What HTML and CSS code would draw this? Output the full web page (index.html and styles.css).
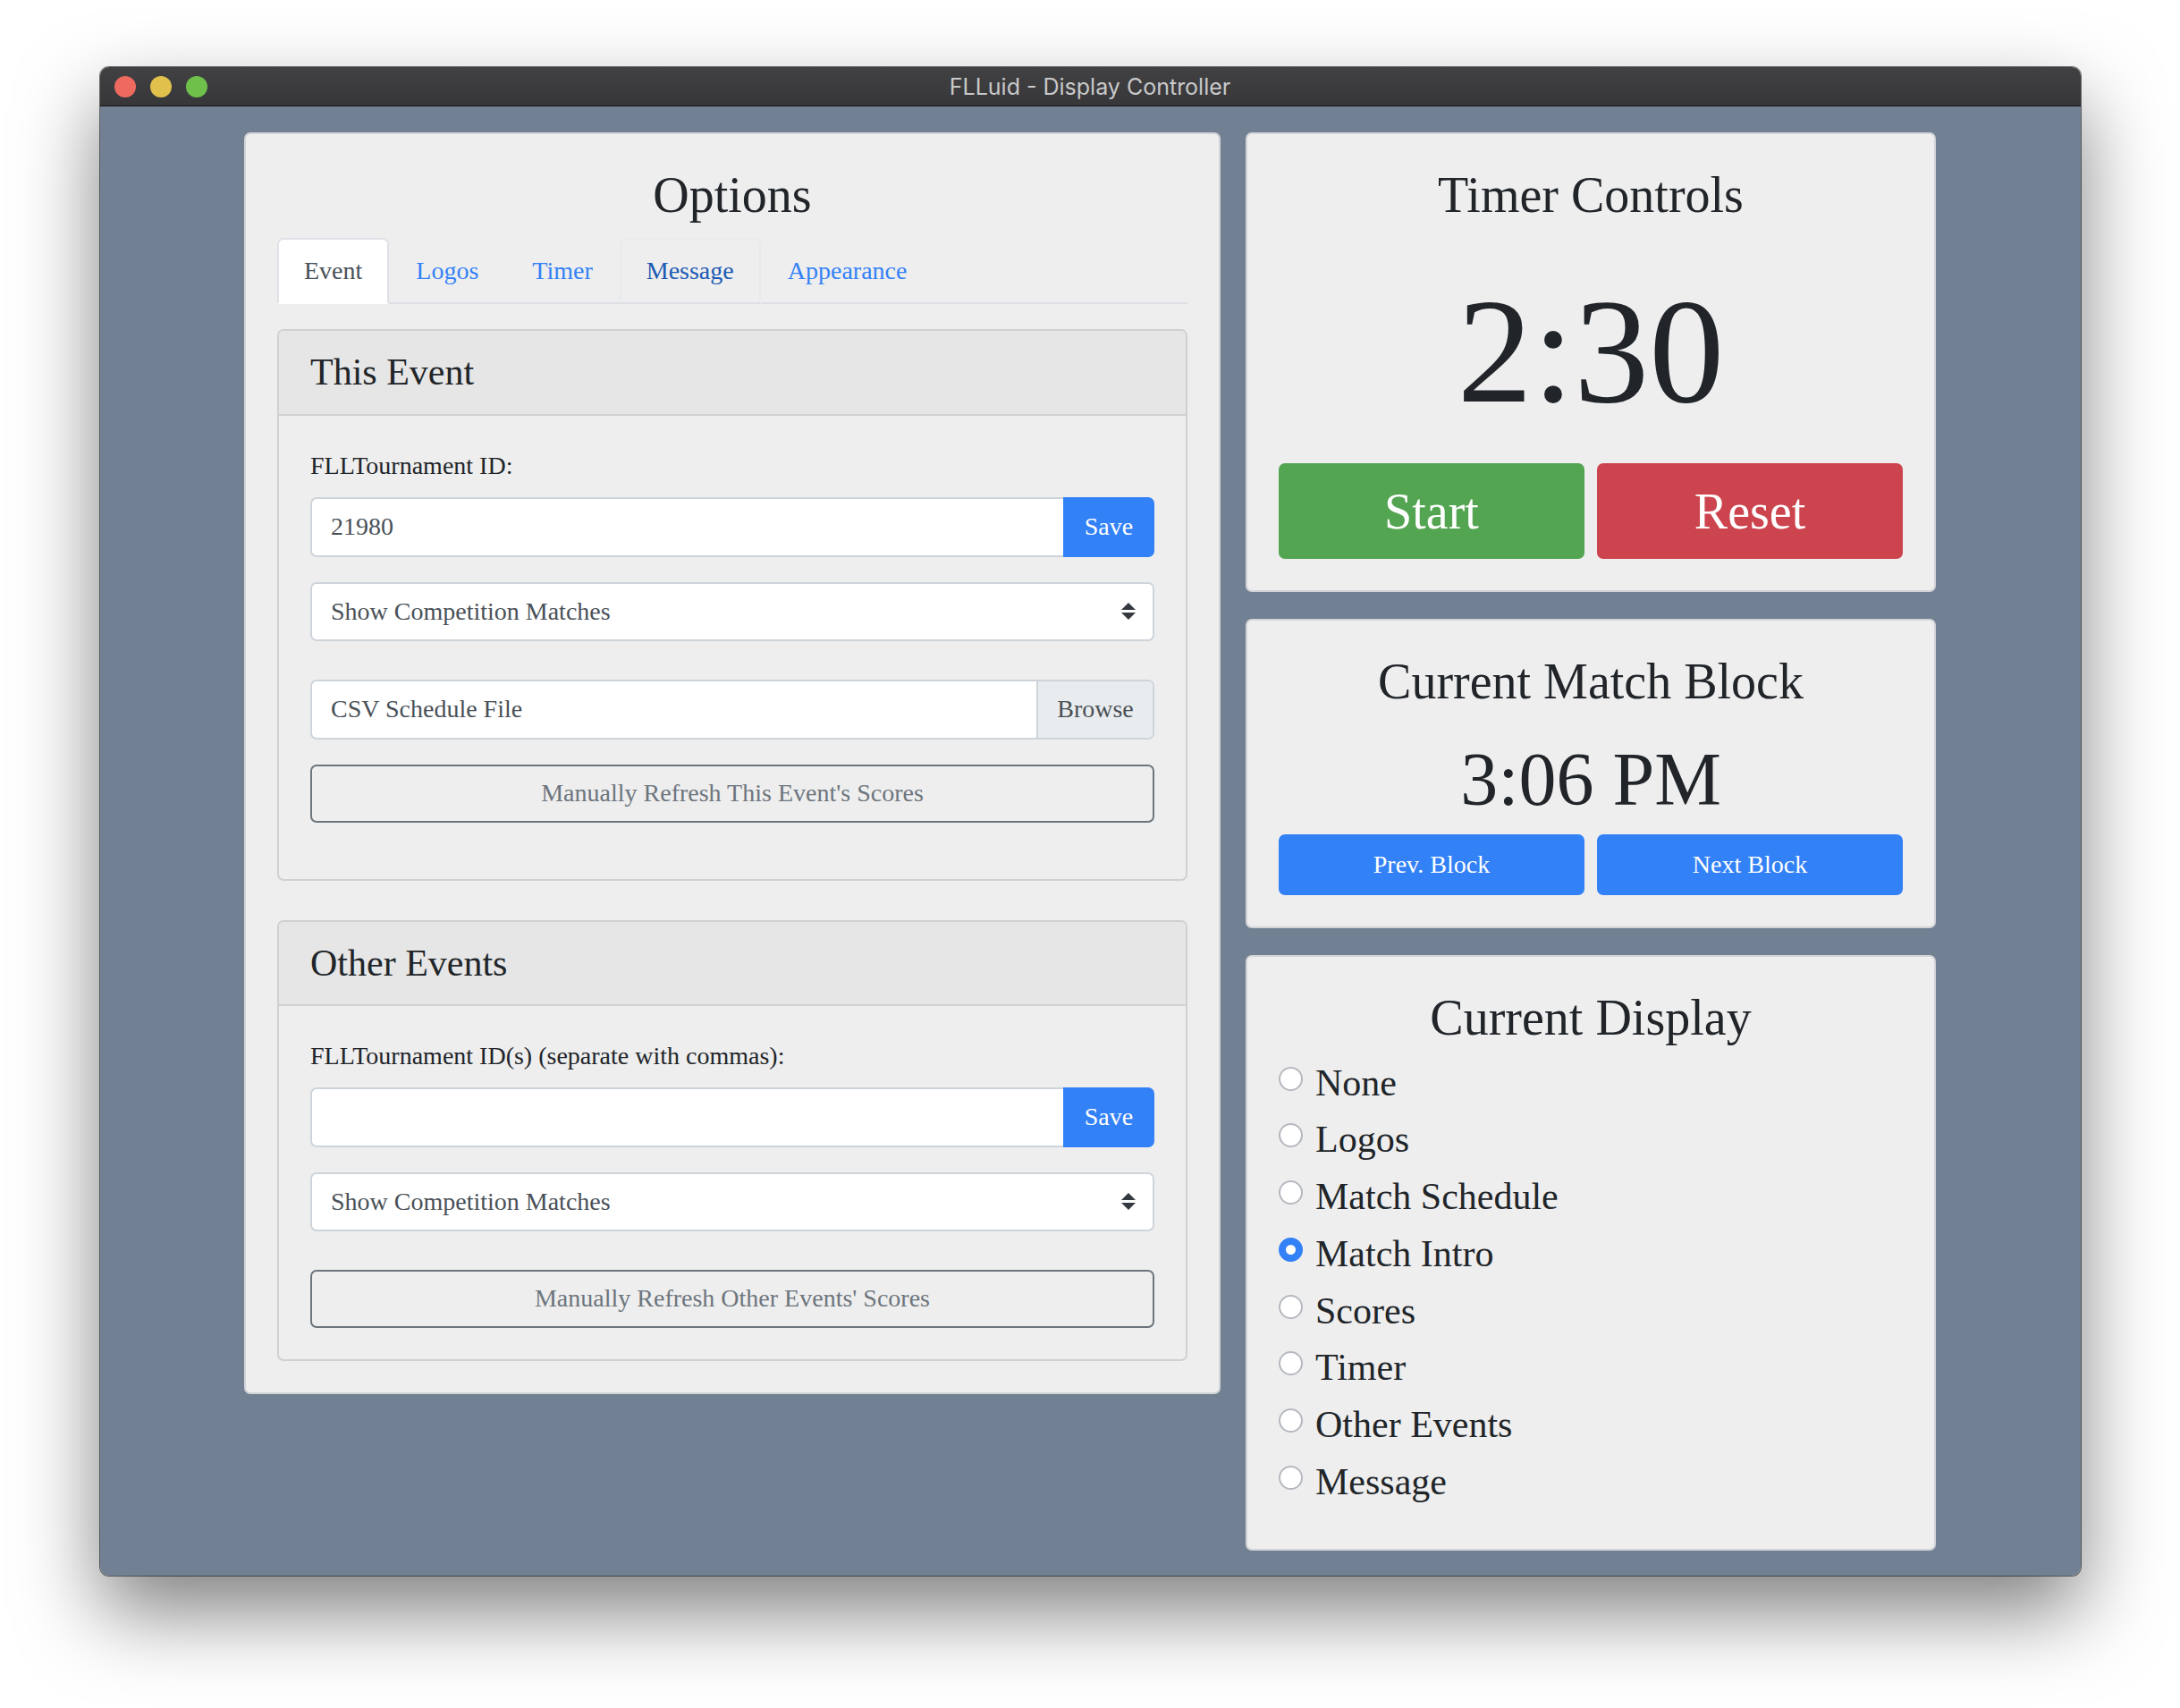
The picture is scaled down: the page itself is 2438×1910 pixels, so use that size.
FILE: index.html
```html
<!DOCTYPE html>
<html lang="en">

<head>
    <link rel="stylesheet" href="styles.css">
</head>

<body>
    <div class="window">
        <div class="titlebar">
            <div class="lights">
                <span class="light red"></span>
                <span class="light yellow"></span>
                <span class="light green"></span>
            </div>
            <div class="title">FLLuid - Display Controller</div>
            <div></div>
        </div>

        <div class="content">
            <div class="col-left">
                <div class="card">
                    <h2>Options</h2>
                    <ul class="nav-tabs">
                        <li><a class="tab active">Event</a></li>
                        <li><a class="tab">Logos</a></li>
                        <li><a class="tab">Timer</a></li>
                        <li><a class="tab hover">Message</a></li>
                        <li><a class="tab">Appearance</a></li>
                    </ul>

                    <div class="tab-content">
                        <div class="sub-card">
                            <div class="sub-header">
                                <h4>This Event</h4>
                            </div>
                            <div class="sub-body">
                                <label>FLLTournament ID:</label>
                                <div class="input-group group-gap">
                                    <input type="text" value="21980">
                                    <button class="btn-save">Save</button>
                                </div>
                                <div class="select select-gap">
                                    <span>Show Competition Matches</span>
                                    <svg width="16" height="20" viewBox="0 0 16 20">
                                        <path d="M8 0 L16 8 L0 8 Z" fill="#343a40" />
                                        <path d="M0 11 L16 11 L8 19 Z" fill="#343a40" />
                                    </svg>
                                </div>
                                <div class="file-input group-gap">
                                    <span class="file-label">CSV Schedule File</span>
                                    <span class="browse">Browse</span>
                                </div>
                                <button class="btn-outline group-gap">Manually Refresh This Event's Scores</button>
                            </div>
                        </div>

                        <div class="sub-card other">
                            <div class="sub-header">
                                <h4>Other Events</h4>
                            </div>
                            <div class="sub-body">
                                <label>FLLTournament ID(s) (separate with commas):</label>
                                <div class="input-group group-gap">
                                    <input type="text" value="">
                                    <button class="btn-save">Save</button>
                                </div>
                                <div class="select select-gap">
                                    <span>Show Competition Matches</span>
                                    <svg width="16" height="20" viewBox="0 0 16 20">
                                        <path d="M8 0 L16 8 L0 8 Z" fill="#343a40" />
                                        <path d="M0 11 L16 11 L8 19 Z" fill="#343a40" />
                                    </svg>
                                </div>
                                <button class="btn-outline">Manually Refresh Other Events' Scores</button>
                            </div>
                        </div>
                    </div>
                </div>
            </div>

            <div class="col-right">
                <div class="card">
                    <h2>Timer Controls</h2>
                    <div class="timer">2:30</div>
                    <div class="btn-row">
                        <button class="btn-big start">Start</button>
                        <button class="btn-big reset">Reset</button>
                    </div>
                </div>

                <div class="card">
                    <h2>Current Match Block</h2>
                    <div class="block-time">3:06 PM</div>
                    <div class="btn-row">
                        <button class="btn-blue">Prev. Block</button>
                        <button class="btn-blue">Next Block</button>
                    </div>
                </div>

                <div class="card">
                    <h2>Current Display</h2>
                    <label class="radio"><input type="radio" name="display"> None</label>
                    <label class="radio"><input type="radio" name="display"> Logos</label>
                    <label class="radio"><input type="radio" name="display"> Match Schedule</label>
                    <label class="radio"><input type="radio" name="display" checked> Match Intro</label>
                    <label class="radio"><input type="radio" name="display"> Scores</label>
                    <label class="radio"><input type="radio" name="display"> Timer</label>
                    <label class="radio"><input type="radio" name="display"> Other Events</label>
                    <label class="radio"><input type="radio" name="display"> Message</label>
                </div>
            </div>
        </div>
    </div>
</body>

</html>
```

FILE: styles.css
```css
body {
    margin: 0;
    padding: 75px 0 0;
    min-height: 1910px;
    box-sizing: border-box;
    background-color: #FFFFFF;
    font-family: "Liberation Serif", "Times New Roman", serif;
    color: #212529;
}

.window {
    width: 2215px;
    height: 1687px;
    margin: 0 auto;
    border-radius: 10px;
    overflow: hidden;
    box-shadow: 0 0 0 1px rgba(0, 0, 0, 0.55), 0 40px 90px rgba(0, 0, 0, 0.5);
    display: flex;
    flex-direction: column;
}

.titlebar {
    height: 43px;
    border-bottom: 1px solid #141414;
    background: linear-gradient(#414144, #37373a);
    display: grid;
    grid-template-columns: 1fr auto 1fr;
    align-items: center;
}

.lights {
    display: flex;
    gap: 16px;
    padding-left: 16px;
}

.light {
    width: 24px;
    height: 24px;
    border-radius: 50%;
}

.red { background-color: #EE6A5F; }
.yellow { background-color: #E2C04C; }
.green { background-color: #6FBF4B; }

.title {
    font-family: "Inter", "Liberation Sans", sans-serif;
    font-size: 25px;
    color: #C9C9C9;
}

.content {
    flex: 1;
    background-color: #728093;
    display: flex;
    justify-content: center;
    align-items: flex-start;
    gap: 28px;
    padding-top: 29px;
}

.col-left {
    width: 1092px;
}

.col-right {
    width: 772px;
    display: flex;
    flex-direction: column;
    gap: 30px;
}

.card {
    background-color: #EEEEEE;
    border: 2px solid #D2D4D7;
    border-radius: 7px;
    padding: 35px;
}

h2 {
    font-size: 56px;
    font-weight: normal;
    line-height: 1.2;
    text-align: center;
    margin: 0 0 14px;
}

.nav-tabs {
    list-style: none;
    margin: 0;
    padding: 0;
    display: flex;
    border-bottom: 2px solid #DCDFE3;
}

.tab {
    display: block;
    font-size: 28px;
    line-height: 42px;
    padding: 14px 28px;
    border: 2px solid transparent;
    border-radius: 7px 7px 0 0;
    margin-bottom: -2px;
    color: #3381F6;
}

.tab.active {
    background-color: #FFFFFF;
    color: #495057;
    border-color: #DEE2E6 #DEE2E6 #FFFFFF;
}

.tab.hover {
    color: #1D5AB4;
    border-color: #E8EAED #E8EAED #DCDFE3;
}

.tab-content {
    margin-top: 28px;
}

.sub-card {
    border: 2px solid #D0D0D0;
    border-radius: 7px;
}

.sub-card.other {
    margin-top: 44px;
}

.sub-header {
    background-color: #E6E6E6;
    padding: 21px 35px;
    border-bottom: 2px solid #D0D0D0;
    border-radius: 5px 5px 0 0;
}

h4 {
    font-size: 42px;
    font-weight: normal;
    line-height: 1.2;
    margin: 0;
}

.sub-body {
    padding: 35px;
}

label {
    display: block;
    font-size: 28px;
    line-height: 42px;
    margin-bottom: 14px;
}

.group-gap {
    margin-bottom: 28px;
}

.select-gap {
    margin-bottom: 43px;
}

.input-group {
    display: flex;
    height: 67px;
}

.input-group input {
    flex: 1;
    min-width: 0;
    box-sizing: border-box;
    height: 67px;
    border: 2px solid #CED4DA;
    border-right: none;
    border-radius: 7px 0 0 7px;
    padding: 0 21px;
    font-family: inherit;
    font-size: 28px;
    color: #495057;
    background-color: #FFFFFF;
    outline: none;
}

.btn-save {
    width: 102px;
    border: none;
    border-radius: 0 7px 7px 0;
    background-color: #3381F6;
    color: #FFFFFF;
    font-family: inherit;
    font-size: 28px;
}

.select {
    box-sizing: border-box;
    height: 66px;
    border: 2px solid #CED4DA;
    border-radius: 7px;
    background-color: #FFFFFF;
    display: flex;
    align-items: center;
    justify-content: space-between;
    padding: 0 19px 0 21px;
    font-size: 28px;
    color: #495057;
}

.file-input {
    box-sizing: border-box;
    height: 67px;
    border: 2px solid #CED4DA;
    border-radius: 7px;
    background-color: #FFFFFF;
    display: flex;
    font-size: 28px;
    color: #495057;
    overflow: hidden;
}

.file-label {
    flex: 1;
    display: flex;
    align-items: center;
    padding-left: 21px;
}

.browse {
    width: 128px;
    display: flex;
    align-items: center;
    justify-content: center;
    background-color: #E9ECEF;
    border-left: 2px solid #CED4DA;
}

.btn-outline {
    display: block;
    width: 100%;
    height: 65px;
    border: 2px solid #6C757D;
    border-radius: 7px;
    background: transparent;
    color: #6C757D;
    font-family: inherit;
    font-size: 28px;
}

.timer {
    font-size: 168px;
    line-height: 252px;
    text-align: center;
}

.block-time {
    font-size: 84px;
    line-height: 123px;
    text-align: center;
}

.btn-row {
    display: grid;
    grid-template-columns: 1fr 1fr;
    gap: 14px;
}

.btn-big {
    height: 107px;
    border: none;
    border-radius: 7px;
    color: #FFFFFF;
    font-family: inherit;
    font-size: 56px;
}

.start { background-color: #53A552; }
.reset { background-color: #CC444E; }

.btn-blue {
    height: 68px;
    border: none;
    border-radius: 7px;
    background-color: #3381F6;
    color: #FFFFFF;
    font-family: inherit;
    font-size: 28px;
}

.radio {
    display: flex;
    align-items: flex-start;
    font-size: 42px;
    line-height: 48px;
    margin-bottom: 15.75px;
}

.radio input {
    appearance: none;
    width: 27px;
    height: 27px;
    margin: 6px 14px 0 0;
    border-radius: 50%;
    border: 2px solid #B5B9BF;
    background-color: #FFFFFF;
    box-sizing: border-box;
}

.radio input:checked {
    border: 8px solid #3381F6;
}
```
